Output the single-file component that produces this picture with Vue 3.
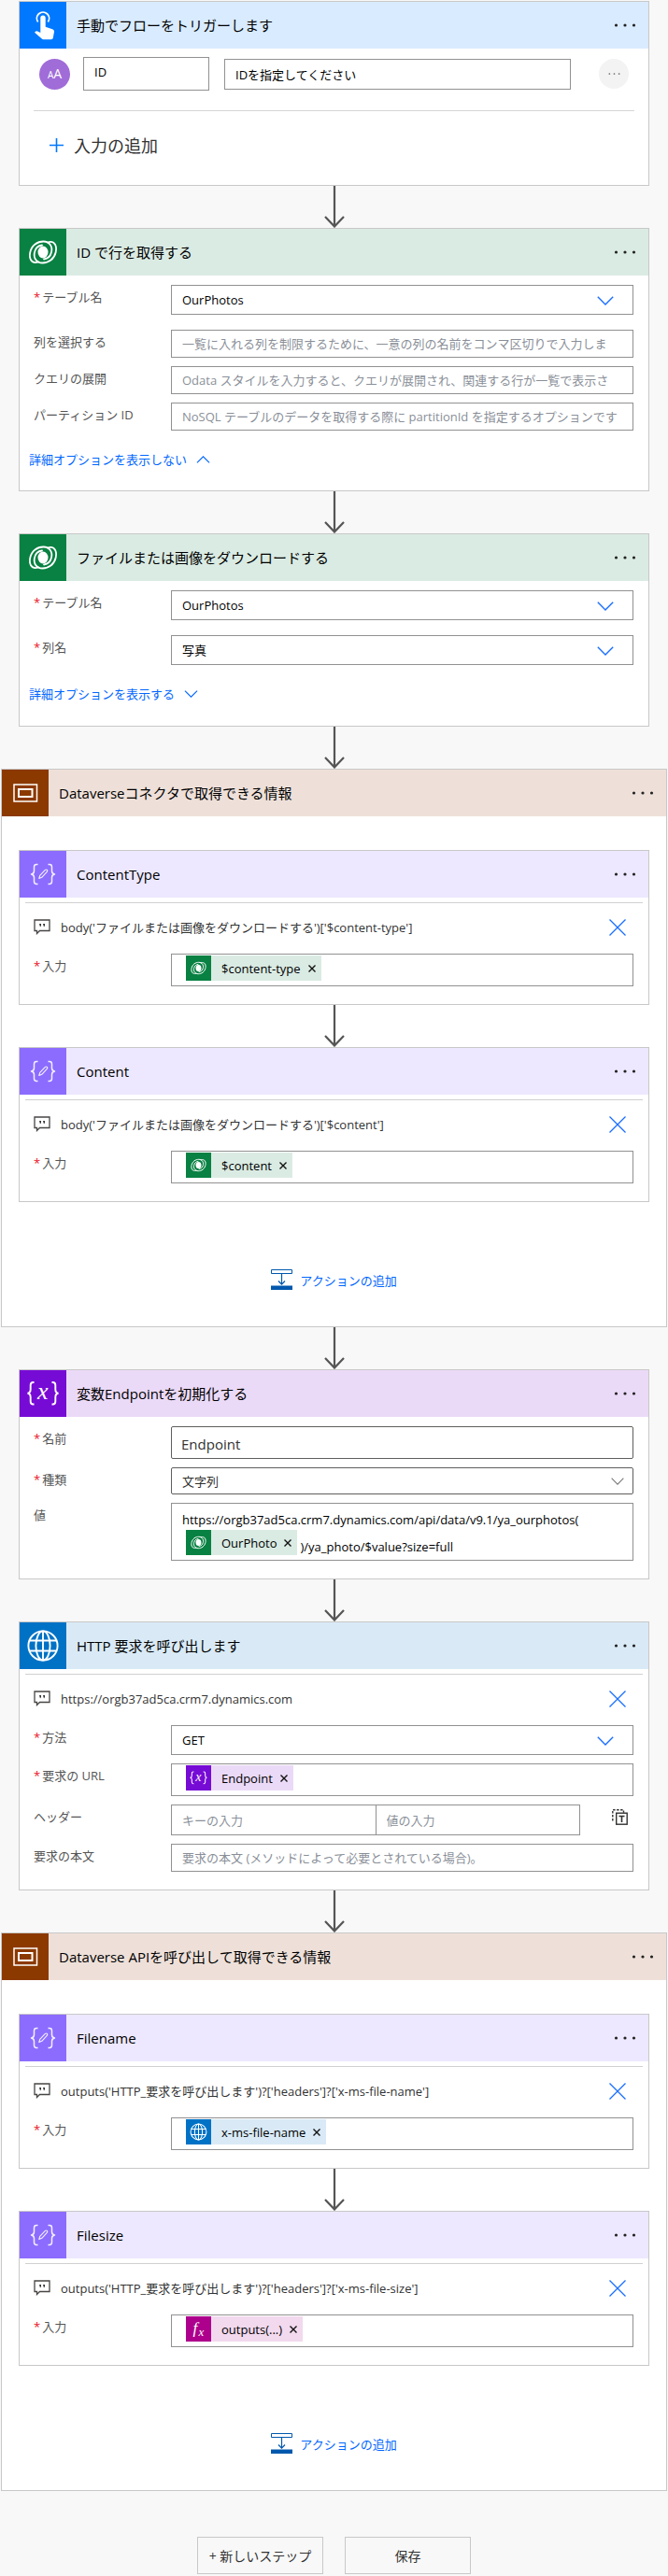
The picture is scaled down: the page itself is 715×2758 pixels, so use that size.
<script setup>
import { ref } from 'vue'

const idName = ref('ID')
const idHint = ref('IDを指定してください')

const dataverse = { icon: 'dataverse', tone: 'green' }

// Letters drawn on top of an icon, in its 50 x 50 view box.
const glyphs = {
  variable: [{ text: 'x', x: 19, y: 31, size: 26 }],
  fx: [{ text: 'f', x: 14, y: 34, size: 32 }, { text: 'x', x: 25, y: 38, size: 24 }],
}

const steps = [
  { id: 'trigger', kind: 'trigger', title: '手動でフローをトリガーします', icon: 'touch', tone: 'blue' },
  {
    id: 'getrow', kind: 'action', title: 'ID で行を取得する', ...dataverse,
    fields: [
      { label: 'テーブル名', required: true, type: 'select', value: 'OurPhotos', wide: true },
      { label: '列を選択する', type: 'text', placeholder: '一覧に入れる列を制限するために、一意の列の名前をコンマ区切りで入力しま' },
      { label: 'クエリの展開', type: 'text', placeholder: 'Odata スタイルを入力すると、クエリが展開され、関連する行が一覧で表示さ' },
      { label: 'パーティション ID', type: 'text', placeholder: 'NoSQL テーブルのデータを取得する際に partitionId を指定するオプションです' },
    ],
    advanced: { text: '詳細オプションを表示しない', open: true },
  },
  {
    id: 'download', kind: 'action', title: 'ファイルまたは画像をダウンロードする', ...dataverse,
    fields: [
      { label: 'テーブル名', required: true, type: 'select', value: 'OurPhotos', wide: true },
      { label: '列名', required: true, type: 'select', value: '写真' },
    ],
    advanced: { text: '詳細オプションを表示する', open: false },
  },
  {
    id: 'scope1', kind: 'scope', title: 'Dataverseコネクタで取得できる情報', icon: 'scope', tone: 'brown',
    steps: [
      {
        id: 'ctype', title: 'ContentType', icon: 'compose', tone: 'violet',
        note: "body('ファイルまたは画像をダウンロードする')['$content-type']",
        fields: [{ label: '入力', required: true, type: 'token', token: { text: '$content-type', ...dataverse } }],
      },
      {
        id: 'content', title: 'Content', icon: 'compose', tone: 'violet',
        note: "body('ファイルまたは画像をダウンロードする')['$content']",
        fields: [{ label: '入力', required: true, type: 'token', token: { text: '$content', ...dataverse } }],
      },
    ],
  },
  {
    id: 'variable', kind: 'action', title: '変数Endpointを初期化する', icon: 'variable', tone: 'purple',
    fields: [
      { label: '名前', required: true, type: 'name', value: 'Endpoint' },
      { label: '種類', required: true, type: 'enum', value: '文字列' },
      {
        label: '値', type: 'rich',
        before: 'https://orgb37ad5ca.crm7.dynamics.com/api/data/v9.1/ya_ourphotos(',
        token: { text: 'OurPhoto', ...dataverse },
        after: ')/ya_photo/$value?size=full',
      },
    ],
  },
  {
    id: 'http', kind: 'action', title: 'HTTP 要求を呼び出します', icon: 'globe', tone: 'azure',
    note: 'https://orgb37ad5ca.crm7.dynamics.com',
    fields: [
      { label: '方法', required: true, type: 'select', value: 'GET' },
      { label: '要求の URL', required: true, type: 'token', token: { text: 'Endpoint', icon: 'variable', tone: 'purple' } },
      { label: 'ヘッダー', type: 'pair', placeholders: ['キーの入力', '値の入力'] },
      { label: '要求の本文', type: 'text', placeholder: '要求の本文 (メソッドによって必要とされている場合)。' },
    ],
  },
  {
    id: 'scope2', kind: 'scope', title: 'Dataverse APIを呼び出して取得できる情報', icon: 'scope', tone: 'brown',
    steps: [
      {
        id: 'fname', title: 'Filename', icon: 'compose', tone: 'violet',
        note: "outputs('HTTP_要求を呼び出します')?['headers']?['x-ms-file-name']",
        fields: [{ label: '入力', required: true, type: 'token', token: { text: 'x-ms-file-name', icon: 'globe', tone: 'azure' } }],
      },
      {
        id: 'fsize', title: 'Filesize', icon: 'compose', tone: 'violet',
        note: "outputs('HTTP_要求を呼び出します')?['headers']?['x-ms-file-size']",
        fields: [{ label: '入力', required: true, type: 'token', token: { text: 'outputs(...)', icon: 'fx', tone: 'magenta' } }],
      },
    ],
  },
]

// Every top-level entry is rendered as a list of cards; a scope wraps its own list.
const cardsOf = (step) => (step.kind === 'scope' ? step.steps : [step])
</script>

<template>
  <svg class="defs" aria-hidden="true">
    <symbol id="i-touch" viewBox="0 0 50 50">
      <path d="M19.6 21.5a6.6 6.6 0 1 1 10.8 0" fill="none" stroke="#fff" stroke-width="1.8" />
      <path d="M22.3 17.2a2.7 2.7 0 0 1 5.4 0v9.6l7.4 2.4c1.3.5 2 1.5 1.9 2.8l-1.2 6.6c-.2 1-1 1.6-2 1.6h-8.3c-.8 0-1.5-.3-2-.9L16 32.800l1-1c.6-.6 1.4-.7 2.1-.4l3.2 1.5z" fill="#fff" />
    </symbol>
    <symbol id="i-dataverse" viewBox="0 0 50 50">
      <g fill="none" stroke="#fff" stroke-width="1.8" stroke-linecap="round">
        <path d="M20 35.5C12 38 10 31 11.3 25C13 17.5 19 13.5 25.500 13.5C32 13.5 35.5 19 34 25C33 29.5 30 32 26 32.5" />
        <path d="M30 14.5C38 12 40 19 38.7 25C37 32.5 31 36.5 24.5 36.5C18 36.5 14.5 31 16 25C17 20.5 20 18 24 17.5" />
      </g>
      <ellipse cx="25" cy="25" rx="5.5" ry="6.5" fill="#fff" />
    </symbol>
    <symbol id="i-scope" viewBox="0 0 50 50">
      <rect x="13" y="16" width="24.5" height="18" fill="none" stroke="#fff" stroke-width="1.5" />
      <rect x="18" y="21" width="14.5" height="8" fill="none" stroke="#fff" stroke-width="2" />
    </symbol>
    <symbol id="i-compose" viewBox="0 0 50 50">
      <g fill="none" stroke="#fff" stroke-width="1.5" stroke-linejoin="round" opacity=".9">
        <path d="M19.5 14.5h-1.500q-2.500 0-2.500 2.700v4.300q0 3-3 3.500q3 .5 3 3.500v4.300q0 2.700 2.500 2.700h1.500" />
        <path d="M30.5 14.5h1.500q2.500 0 2.500 2.700v4.300q0 3 3 3.500q-3 .5-3 3.500v4.300q0 2.700-2.500 2.700h-1.500" />
        <path d="M20.800 29.500l.9-3.200 5.700-5.900q1.100-.9 2 0 .8.900-.1 1.900l-5.500 6z" stroke-width="1.1" />
      </g>
    </symbol>
    <symbol id="i-variable" viewBox="0 0 50 50">
      <g fill="none" stroke="#fff" stroke-width="1.9">
        <path d="M15.500 13h-1q-2.800 0-2.800 3v4.500q0 3.800-3.200 4.200q3.200.4 3.200 4.200v4.600q0 3 2.800 3h1" />
        <path d="M34.500 13h1q2.800 0 2.800 3v4.500q0 3.800 3.200 4.200q-3.200.4-3.200 4.200v4.600q0 3-2.800 3h-1" />
      </g>
    </symbol>
    <symbol id="i-globe" viewBox="0 0 50 50">
      <g fill="none" stroke="#fff" stroke-width="1.9">
        <circle cx="25" cy="25" r="15.6" />
        <ellipse cx="25" cy="25" rx="7.6" ry="15.6" />
        <path d="M25 9.400v31.200M10.300 19.500h29.400M10.300 30.500h29.400" />
      </g>
    </symbol>
    <symbol id="i-fx" viewBox="0 0 50 50" />
    <symbol id="i-dots" viewBox="0 0 24 6">
      <circle cx="2.5" cy="3" r="1.6" /><circle cx="12" cy="3" r="1.6" /><circle cx="21.5" cy="3" r="1.6" />
    </symbol>
    <symbol id="i-chevron" viewBox="0 0 18 10">
      <path d="M.8.8L9 9L17.200.8" fill="none" stroke="currentColor" stroke-width="1.4" />
    </symbol>
    <symbol id="i-close" viewBox="0 0 18 18">
      <path d="M.5.5l17 17M17.500.5l-17 17" fill="none" stroke="currentColor" stroke-width="1.3" />
    </symbol>
    <symbol id="i-remove" viewBox="0 0 8 8">
      <path d="M.5.5l7 7M7.500.5l-7 7" fill="none" stroke="#111" stroke-width="1.4" />
    </symbol>
    <symbol id="i-note" viewBox="0 0 18 17">
      <path d="M1 1h16v11.500H6.500L3.500 15.500V12.500H1z" fill="none" stroke="#484644" stroke-width="1.3" />
      <path d="M6 5h2v2l-1 1.500zM10 5h2v2l-1 1.500z" fill="#323130" />
    </symbol>
    <symbol id="i-insert" viewBox="0 0 23 22">
      <path d="M.5.5h22v4h-22z" fill="#fff" stroke="#0058ad" />
      <path d="M11.500 5v11M8 12.500l3.500 3.700 3.500-3.700" fill="none" stroke="#0058ad" stroke-width="1.2" />
      <path d="M0 17.500h23V22H0z" fill="#0058ad" />
    </symbol>
    <symbol id="i-textmode" viewBox="0 0 17 17">
      <path d="M.8 12.500V.8h11.700v3" fill="none" stroke="#323130" stroke-width="1.4" stroke-dasharray="2.5 1.5" />
      <rect x="4.7" y="4.2" width="11.5" height="12" fill="#fff" stroke="#323130" stroke-width="1.4" />
      <path d="M7.500 7.500h6M10.500 7.500v6.500" stroke="#323130" stroke-width="1.6" />
    </symbol>
    <symbol id="i-arrow" viewBox="0 0 24 45">
      <path d="M12 0v43M2 33l10 10.500L22 33" fill="none" stroke="#555" stroke-width="2.2" />
    </symbol>
  </svg>

  <main class="flow">
    <template v-for="(step, n) in steps" :key="step.id">
      <svg v-if="n" class="arrow" aria-hidden="true"><use href="#i-arrow" /></svg>

      <section :class="step.kind === 'scope' ? 'scope' : 'plain'">
        <header v-if="step.kind === 'scope'" class="head" :class="step.tone">
          <svg class="head-icon" aria-hidden="true"><use :href="'#i-' + step.icon" /></svg>
          <h2 class="title">{{ step.title }}</h2>
          <button class="more" type="button" aria-label="メニュー"><svg class="dots"><use href="#i-dots" /></svg></button>
        </header>

        <div class="cards">
          <template v-for="(card, m) in cardsOf(step)" :key="card.id">
            <svg v-if="m" class="arrow" aria-hidden="true"><use href="#i-arrow" /></svg>
            <article class="card">
              <header class="head" :class="card.tone">
                <svg class="head-icon" viewBox="0 0 50 50" aria-hidden="true">
                  <use :href="'#i-' + card.icon" />
                  <text v-for="g in glyphs[card.icon]" :key="g.text" class="glyph" :x="g.x" :y="g.y" :font-size="g.size">{{ g.text }}</text>
                </svg>
                <h2 class="title">{{ card.title }}</h2>
                <button class="more" type="button" aria-label="メニュー"><svg class="dots"><use href="#i-dots" /></svg></button>
              </header>

              <template v-if="card.kind === 'trigger'">
                <div class="param">
                  <span class="badge" aria-hidden="true"><span class="badge-small">A</span><span class="badge-large">A</span></span>
                  <input v-model="idName" class="box param-name" type="text" aria-label="入力の名前" />
                  <input v-model="idHint" class="box param-hint" type="text" aria-label="入力の説明" />
                  <button class="round" type="button" aria-label="入力のメニュー"><svg class="round-dots"><use href="#i-dots" /></svg></button>
                </div>
                <button class="add-input" type="button">
                  <svg class="plus" viewBox="0 0 15 15" aria-hidden="true"><path d="M7.500 0v15M0 7.500h15" stroke="#0078ff" stroke-width="1.6" /></svg>
                  入力の追加
                </button>
              </template>

              <template v-else>
                <div v-if="card.note" class="note">
                  <svg class="note-icon" aria-hidden="true"><use href="#i-note" /></svg>
                  <span class="note-text">{{ card.note }}</span>
                  <button class="note-close" type="button" aria-label="コメントを削除"><svg class="close-icon"><use href="#i-close" /></svg></button>
                </div>

                <div class="fields" :class="{ first: !card.note }">
                  <div v-for="(f, k) in card.fields" :key="k" class="field" :class="{ spaced: f.wide }">
                    <label :id="`${card.id}-l${k}`" class="label" :for="`${card.id}-f${k}`"><span v-if="f.required" class="star">*</span>{{ f.label }}</label>

                    <div v-if="f.type === 'select' || f.type === 'enum'" class="pick" :class="f.type">
                      <select :id="`${card.id}-f${k}`" class="box"><option>{{ f.value }}</option></select>
                      <svg class="pick-icon" aria-hidden="true"><use href="#i-chevron" /></svg>
                    </div>

                    <input v-else-if="f.type === 'text'" :id="`${card.id}-f${k}`" class="box line" type="text" :placeholder="f.placeholder" />
                    <input v-else-if="f.type === 'name'" :id="`${card.id}-f${k}`" class="box name" type="text" :value="f.value" />

                    <div v-else-if="f.type === 'pair'" class="pair">
                      <input :id="`${card.id}-f${k}`" class="box" type="text" :placeholder="f.placeholders[0]" />
                      <input class="box" type="text" :placeholder="f.placeholders[1]" aria-label="ヘッダーの値" />
                      <button class="mode" type="button" aria-label="テキスト モードに切り替え"><svg class="mode-icon"><use href="#i-textmode" /></svg></button>
                    </div>

                    <div v-else :id="`${card.id}-f${k}`" class="box rich" :class="{ tall: f.before }" role="textbox" tabindex="0" :aria-labelledby="`${card.id}-l${k}`">
                      <span v-if="f.before" class="rich-line">{{ f.before }}</span>
                      <span class="rich-row">
                        <span class="token" :class="f.token.tone">
                          <svg class="token-icon" viewBox="0 0 50 50" aria-hidden="true">
                            <use :href="'#i-' + f.token.icon" />
                            <text v-for="g in glyphs[f.token.icon]" :key="g.text" class="glyph" :x="g.x" :y="g.y" :font-size="g.size">{{ g.text }}</text>
                          </svg>
                          <span class="token-text">{{ f.token.text }}</span>
                          <button class="token-x" type="button" aria-label="削除"><svg class="x-icon"><use href="#i-remove" /></svg></button>
                        </span>
                        <span v-if="f.after" class="rich-after">{{ f.after }}</span>
                      </span>
                    </div>
                  </div>
                </div>

                <a v-if="card.advanced" class="advanced" :class="{ closed: !card.advanced.open }" href="#">
                  {{ card.advanced.text }}
                  <svg class="advanced-icon" :class="{ up: card.advanced.open }" aria-hidden="true"><use href="#i-chevron" /></svg>
                </a>
              </template>
            </article>
          </template>
        </div>

        <div v-if="step.kind === 'scope'" class="scope-foot">
          <button class="add-action" type="button">
            <svg class="insert" aria-hidden="true"><use href="#i-insert" /></svg>
            アクションの追加
          </button>
        </div>
      </section>
    </template>

    <footer class="actions">
      <button class="step-button" type="button">+ 新しいステップ</button>
      <button class="step-button" type="button">保存</button>
    </footer>
  </main>
</template>

<style>
body {
  background: #f8f8f8;
}
</style>

<style scoped>
.flow,
.flow button,
.flow input,
.flow select {
  font-family: "Open Sans", "Noto Sans CJK JP", sans-serif;
  font-size: 13px;
}
.flow {
  box-sizing: border-box;
  padding: 1px;
  color: #000;
  line-height: 20px;
}
.flow *,
.flow *::before {
  box-sizing: border-box;
}
button {
  border: 0;
  padding: 0;
  background: none;
  color: inherit;
  cursor: pointer;
}
.defs {
  position: absolute;
  width: 0;
  height: 0;
}
.arrow {
  display: block;
  width: 24px;
  height: 45px;
  margin: 0 auto;
}
.plain .cards {
  padding: 0 19px;
}
.scope {
  border: 1px solid #c8c8c8;
  background: #fff;
}
.scope .cards {
  padding: 36px 18px 0;
}
.card {
  border: 1px solid #c8c8c8;
  background: #fff;
}

.head {
  display: flex;
  align-items: center;
  height: 50px;
  padding-right: 13px;
}
.head-icon {
  flex: none;
  width: 50px;
  height: 50px;
}
.glyph {
  fill: #fff;
  font-family: "Liberation Serif", serif;
  font-style: italic;
}
.title {
  flex: 1;
  margin: 0;
  padding-left: 11px;
  font-size: 15px;
  font-weight: 400;
  line-height: 24px;
}
.more {
  display: flex;
}
.dots {
  width: 24px;
  height: 6px;
  fill: #222;
}
.blue { background: #d9ebff; }
.blue .head-icon { background: #0078ff; }
.green { background: #daebe3; }
.green .head-icon, .green .token-icon { background: #088142; }
.brown { background: #eee0d9; }
.brown .head-icon { background: #8c3900; }
.violet { background: #ede8ff; }
.violet .head-icon { background: #8c6cff; }
.purple { background: #ebdaf7; }
.purple .head-icon, .purple .token-icon { background: #770bd6; }
.azure { background: #d9eaf6; }
.azure .head-icon, .azure .token-icon { background: #0072c6; }
.magenta { background: #f2d9ee; }
.magenta .token-icon { background: #ad008c; }

.box {
  border: 1px solid #919191;
  border-radius: 0;
  background: #fff;
  color: #000;
  padding: 0 11px;
  outline-offset: -1px;
}
.box::placeholder {
  color: #8a8f98;
  opacity: 1;
}

.param {
  display: flex;
  align-items: center;
  margin: 0 15px;
  padding: 9px 6px 21px;
  border-bottom: 1px solid #d6d6d6;
}
.badge {
  display: flex;
  align-items: baseline;
  justify-content: center;
  flex: none;
  width: 33px;
  height: 33px;
  border-radius: 50%;
  background: #a06cd8;
  color: #fff;
  line-height: 32px;
}
.badge-small { font-size: 10px; }
.badge-large { font-size: 14px; }
.param-name {
  width: 135px;
  height: 36px;
  margin: 0 16px 0 14px;
  padding-bottom: 4px;
}
.param-hint {
  flex: 1;
  min-width: 0;
  height: 33px;
  margin-right: 30px;
}
.round {
  display: flex;
  align-items: center;
  justify-content: center;
  width: 32px;
  height: 32px;
  border-radius: 50%;
  background: #f3f3f3;
}
.round-dots {
  width: 13px;
  height: 4px;
  fill: #666;
}
.flow .add-input {
  display: flex;
  align-items: center;
  gap: 11px;
  height: 30px;
  margin: 21px 32px 28px;
  color: #333;
  font-size: 18px;
}
.plus {
  width: 15px;
  height: 15px;
}

.note {
  display: flex;
  align-items: center;
  height: 55px;
  margin: 5px 6px 0;
  padding: 0 18px 3px 9px;
  border-top: 1px solid #d0d0d0;
  color: #333;
}
.note-icon {
  flex: none;
  width: 18px;
  height: 17px;
  margin-right: 11px;
}
.note-text {
  flex: 1;
}
.note-close {
  display: flex;
  color: #1a6eff;
}
.close-icon {
  width: 18px;
  height: 18px;
}

.fields {
  display: flex;
  flex-direction: column;
  gap: 9px;
  padding: 0 16px 19px 15px;
}
.first {
  padding-top: 10px;
}
.field {
  display: grid;
  grid-template-columns: 147px minmax(0, 1fr);
  align-items: start;
}
.spaced {
  margin-bottom: 7px;
}
.label {
  padding-top: 3px;
  color: #555;
}
.star {
  margin-right: 2px;
  color: #e81123;
}
.pick {
  position: relative;
}
.pick .box {
  display: block;
  width: 100%;
  height: 32px;
  appearance: none;
}
.pick-icon {
  position: absolute;
  top: 12px;
  right: 21px;
  width: 18px;
  height: 10px;
  color: #1a6eff;
  pointer-events: none;
}
.enum .box {
  height: 29px;
  border-color: #605e5c;
  border-radius: 2px;
  color: #323130;
}
.enum .pick-icon {
  top: 11px;
  right: 10px;
  width: 14px;
  height: 8px;
  color: #777;
}
.line {
  width: 100%;
  height: 30px;
}
.flow .name {
  height: 35px;
  padding: 2px 10px 0;
  border-color: #605e5c;
  border-radius: 2px;
  color: #323130;
  font-size: 15px;
}
.pair {
  display: flex;
  align-items: flex-start;
}
.pair .box {
  flex: 1;
  min-width: 0;
  height: 33px;
}
.pair .box + .box {
  margin-left: -1px;
}
.mode {
  display: flex;
  margin: 5px 6px 0 34px;
}
.mode-icon {
  width: 17px;
  height: 17px;
}
.rich {
  display: flex;
  flex-direction: column;
  min-height: 35px;
  padding-top: 1px;
}
.tall {
  min-height: 62px;
  padding-top: 6px;
}
.rich-line {
  line-height: 22px;
}
.rich-row {
  display: flex;
  align-items: flex-end;
  gap: 3px;
  padding-left: 4px;
}
.rich-after {
  line-height: 18px;
}
.token {
  display: flex;
  align-items: center;
  height: 27px;
  padding-right: 6px;
}
.token-icon {
  width: 27px;
  height: 27px;
  margin-right: 11px;
}
.token-x {
  display: flex;
  margin-left: 8px;
}
.x-icon {
  width: 8px;
  height: 8px;
}
.advanced {
  display: flex;
  align-items: center;
  gap: 10px;
  padding: 2px 0 23px 10px;
  color: #0066ff;
  text-decoration: none;
}
.closed {
  padding-bottom: 24px;
}
.advanced-icon {
  width: 15px;
  height: 8px;
}
.up {
  transform: rotate(180deg);
}

.scope-foot {
  display: flex;
  justify-content: center;
  padding: 71px 0 38px;
}
.add-action {
  display: flex;
  align-items: center;
  gap: 8px;
  height: 24px;
  color: #0066ff;
}
.insert {
  width: 23px;
  height: 22px;
}
.actions {
  display: flex;
  justify-content: center;
  gap: 23px;
  margin-top: 49px;
}
.flow .step-button {
  width: 135px;
  height: 40px;
  border: 1px solid #c8c8c8;
  color: #333;
  font-size: 14px;
}
</style>
